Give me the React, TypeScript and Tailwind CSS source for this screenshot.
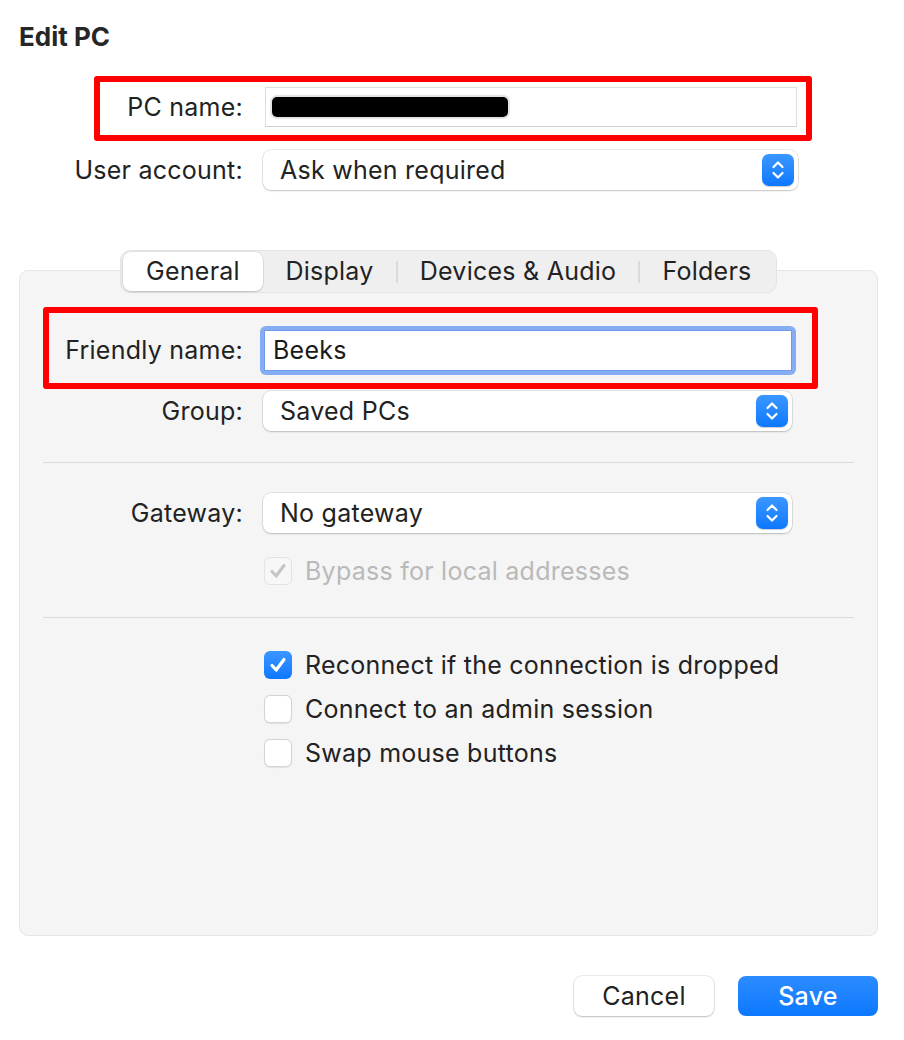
import React from "react";

const FONT = { fontFamily: "Inter, 'Noto Sans', 'Liberation Sans', sans-serif" };
const T = "text-[25px] tracking-[0.25px] leading-none";

function Stepper() {
  return (
    <div className="w-[32px] h-[32px] rounded-[7px] bg-gradient-to-b from-[#3a97ff] to-[#0a78ff] flex items-center justify-center shadow-[0_0.5px_1px_rgba(0,0,0,0.2)]">
      <svg width="16" height="22" viewBox="0 0 16 22" fill="none">
        <path d="M3.5 8 L8 3.5 L12.5 8" stroke="white" strokeWidth="2.2" strokeLinecap="round" strokeLinejoin="round" />
        <path d="M3.5 14 L8 18.5 L12.5 14" stroke="white" strokeWidth="2.2" strokeLinecap="round" strokeLinejoin="round" />
      </svg>
    </div>
  );
}

function Select({ value, width }: { value: string; width: string }) {
  return (
    <div
      className={`${width} h-[40px] rounded-[8px] bg-white flex items-center justify-between pl-[17px] pr-[4px] shadow-[0_0_0_0.5px_rgba(0,0,0,0.14),0_1px_2px_rgba(0,0,0,0.18)]`}
    >
      <span className={`${T} text-[#222]`}>{value}</span>
      <Stepper />
    </div>
  );
}

function CheckMark({ color }: { color: string }) {
  return (
    <svg width="22" height="22" viewBox="0 0 22 22" fill="none">
      <path d="M5 11.5 L9.2 16 L17 5.5" stroke={color} strokeWidth="3.2" strokeLinecap="round" strokeLinejoin="round" />
    </svg>
  );
}

function Check({ checked, disabled, label }: { checked?: boolean; disabled?: boolean; label: string }) {
  return (
    <div className="flex items-center h-[28px]">
      <div className="w-[263px] shrink-0" />
      {checked && !disabled ? (
        <div className="w-[28px] h-[28px] rounded-[6px] bg-gradient-to-b from-[#3b96ff] to-[#0a78ff] flex items-center justify-center">
          <CheckMark color="white" />
        </div>
      ) : disabled ? (
        <div className="w-[28px] h-[28px] rounded-[6px] bg-[#f7f7f7] border border-[#e2e2e2] flex items-center justify-center">
          <CheckMark color="#c6c6c6" />
        </div>
      ) : (
        <div className="w-[28px] h-[28px] rounded-[6px] bg-white border border-[#d4d4d4] shadow-[0_0.5px_1px_rgba(0,0,0,0.08)]" />
      )}
      <span className={`ml-[13px] ${T} ${disabled ? "text-[#b9b9b9]" : "text-[#222]"}`}>{label}</span>
    </div>
  );
}

export default function App() {
  return (
    <div className="w-[904px] h-[1040px] bg-white relative overflow-hidden" style={FONT}>
      <div className="pt-[22px] pl-[19px] text-[26px] font-bold leading-[30px] text-[#262626]">Edit PC</div>

      {/* PC name row */}
      <div className="mt-[35px] flex items-center h-[40px]">
        <div className={`w-[243px] shrink-0 text-right ${T} text-[#222]`}>PC name:</div>
        <div className="ml-[22px] w-[532px] h-[40px] bg-white border border-[#dedede] border-b-[#cfcfcf] flex items-center pl-[6px]">
          <div className="w-[236px] h-[20px] rounded-[5px] bg-black shadow-[0_0_0_2px_#e4e4e4]" />
        </div>
      </div>

      {/* User account */}
      <div className="mt-[23px] flex items-center h-[40px]">
        <div className={`w-[243px] shrink-0 text-right ${T} text-[#222]`}>User account:</div>
        <div className="ml-[20px]">
          <Select value="Ask when required" width="w-[535px]" />
        </div>
      </div>

      {/* Tabs + panel */}
      <div className="mt-[60px] pl-[19px] flex flex-col items-start">
        <div className="ml-[101px] relative z-10 flex items-center h-[43px] p-[2px] rounded-[10px] bg-[#efefef] border border-[#e4e4e4]">
          <div className={`w-[140px] h-[39px] rounded-[8px] bg-white shadow-[0_0_0_0.5px_rgba(0,0,0,0.1),0_1px_2px_rgba(0,0,0,0.15)] flex items-center justify-center ${T} text-[#222]`}>
            General
          </div>
          <div className={`w-[133px] flex items-center justify-center ${T} text-[#222]`}>Display</div>
          <div className="w-[2px] h-[22px] bg-[#dadada]" />
          <div className={`w-[240px] flex items-center justify-center ${T} text-[#222]`}>Devices &amp; Audio</div>
          <div className="w-[2px] h-[22px] bg-[#dadada]" />
          <div className={`w-[134px] flex items-center justify-center ${T} text-[#222]`}>Folders</div>
        </div>

        <div className="-mt-[23px] w-[859px] h-[666px] bg-[#f5f5f5] border border-[#e6e6e6] rounded-[9px] flex flex-col">
          {/* Friendly name */}
          <div className="mt-[55px] flex items-center h-[49px]">
            <div className={`w-[223px] shrink-0 text-right ${T} text-[#222]`}>Friendly name:</div>
            <div className="ml-[17px] w-[536px] h-[49px] rounded-[6px] bg-[#85adf4] p-[4px]">
              <div className={`w-full h-full bg-white border border-[#6f9bea] flex items-center pl-[8px] ${T} text-[#1a1a1a]`}>
                Beeks
              </div>
            </div>
          </div>

          {/* Group */}
          <div className="mt-[16px] flex items-center h-[40px]">
            <div className={`w-[223px] shrink-0 text-right ${T} text-[#222]`}>Group:</div>
            <div className="ml-[20px]">
              <Select value="Saved PCs" width="w-[529px]" />
            </div>
          </div>

          <div className="mt-[31px] mx-[23px] h-[1px] bg-[#dcdcdc]" />

          {/* Gateway */}
          <div className="mt-[30px] flex items-center h-[40px]">
            <div className={`w-[223px] shrink-0 text-right ${T} text-[#222]`}>Gateway:</div>
            <div className="ml-[20px]">
              <Select value="No gateway" width="w-[529px]" />
            </div>
          </div>

          <div className="mt-[24px] -ml-[19px]">
            <Check disabled checked label="Bypass for local addresses" />
          </div>

          <div className="mt-[32px] mx-[23px] h-[1px] bg-[#dcdcdc]" />

          <div className="mt-[33px] -ml-[19px] flex flex-col gap-[16px]">
            <Check checked label="Reconnect if the connection is dropped" />
            <Check label="Connect to an admin session" />
            <Check label="Swap mouse buttons" />
          </div>
        </div>
      </div>

      {/* Buttons */}
      <div className="mt-[40px] flex justify-end pr-[26px] gap-[24px]">
        <div className={`w-[140px] h-[40px] rounded-[8px] bg-white shadow-[0_0_0_0.5px_rgba(0,0,0,0.15),0_1px_2px_rgba(0,0,0,0.2)] flex items-center justify-center ${T} text-[#222]`}>
          Cancel
        </div>
        <div className={`w-[140px] h-[40px] rounded-[8px] bg-gradient-to-b from-[#2b8cff] to-[#0a78ff] flex items-center justify-center ${T} text-white font-medium`}>
          Save
        </div>
      </div>

      {/* Red annotation boxes */}
      <div className="absolute left-[94px] top-[76px] w-[718px] h-[65px] border-[6px] border-[#ff0000] rounded-[3px] pointer-events-none" />
      <div className="absolute left-[43px] top-[307px] w-[775px] h-[82px] border-[6px] border-[#ff0000] rounded-[3px] pointer-events-none" />
    </div>
  );
}
